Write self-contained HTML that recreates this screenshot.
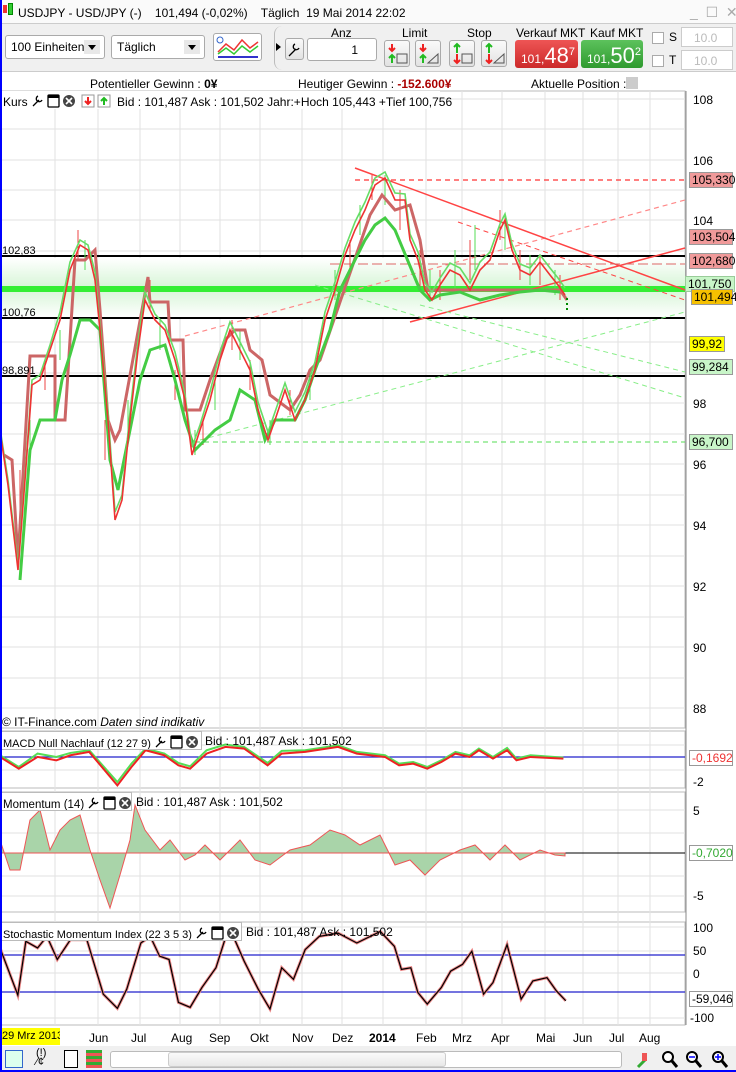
<!DOCTYPE html>
<html><head><meta charset="utf-8"><style>
*{margin:0;padding:0;box-sizing:border-box}
body{width:736px;height:1072px;overflow:hidden;background:#fff;font-family:"Liberation Sans",sans-serif;font-size:12px;color:#000;position:relative}
div{white-space:nowrap}
.a{position:absolute}
.btn{position:absolute;border:1px solid #aaa;border-radius:3px;background:linear-gradient(#fafafa,#e2e2e2)}
.sel{position:absolute;border:1px solid #aaa;border-radius:3px;background:#fff;height:24px;padding:4px 5px;font-size:12px}
.sel i{position:absolute;right:4px;top:4px;width:16px;height:14px;background:#e8e8e8}
.sel i:after{content:"";position:absolute;left:4px;top:5px;border:4px solid transparent;border-top:5px solid #000}
.lbl{position:absolute;font-size:12px;color:#000}
.tag{position:absolute;left:690px;width:44px;height:16px;font-size:12px;line-height:15px;padding-left:2px;border:1px solid #999}
.ic{display:inline-block;vertical-align:-3px;margin-left:3px}
</style></head><body>
<svg width="0" height="0" style="position:absolute"><defs>
<g id="ico"><path d="M2 13L8 7M7 3a3 3 0 1 0 4 4" fill="none" stroke="#000" stroke-width="1.3"/><rect x="17" y="2" width="11" height="12" rx="1" fill="#fff" stroke="#000" stroke-width="1.3"/><rect x="17" y="2" width="11" height="3" fill="#000"/><circle cx="38" cy="8" r="6" fill="#444"/><path d="M35 5l6 6M41 5l-6 6" stroke="#fff" stroke-width="1.6"/></g>
</defs></svg>
<div class="a" style="left:0;top:0;width:2px;height:1072px;background:#00f;z-index:9"></div>
<div class="a" style="left:0;top:1070px;width:736px;height:2px;background:#00f;z-index:9"></div>
<div class="a" style="left:0;top:0;width:736px;height:24px;background:#fafafa;border-bottom:1px solid #ccc"></div>
<div class="a" style="left:3px;top:5px;width:4px;height:8px;background:#e33"></div>
<div class="a" style="left:8px;top:3px;width:5px;height:12px;background:#3c3;border:1px solid #080"></div>
<div class="lbl" style="left:18px;top:6px">USDJPY - USD/JPY (-) &nbsp;&nbsp; 101,494 (-0,02%) &nbsp;&nbsp; Täglich &nbsp;19 Mai 2014 22:02</div>
<div class="lbl" style="left:690px;top:4px;color:#aaa;font-size:14px">_ &nbsp;☐ &nbsp;✕</div>
<div class="a" style="left:0;top:24px;width:736px;height:48px;background:#f0f0f0;border-bottom:1px solid #ccc"></div>
<div class="sel" style="left:5px;top:35px;width:100px">100 Einheiten<i></i></div>
<div class="sel" style="left:111px;top:35px;width:94px">Täglich<i></i></div>
<div class="btn" style="left:213px;top:33px;width:49px;height:28px;background:#fff">
<svg width="47" height="26"><polyline points="4,18 12,10 20,16 28,6 36,14 44,8" fill="none" stroke="#e33" stroke-width="1.5"/><polyline points="4,20 12,14 20,20 28,12 36,18 44,12" fill="none" stroke="#3c3" stroke-width="1.5"/><rect x="4" y="22" width="40" height="2" fill="#33c"/><circle cx="6" cy="6" r="3" fill="none" stroke="#36c"/></svg></div>
<div class="a" style="left:274px;top:26px;width:12px;height:44px;border-left:1px solid #bbb;border-radius:8px 0 0 8px"></div>
<div class="a" style="left:276px;top:43px;border:4px solid transparent;border-left:5px solid #000"></div>
<div class="btn" style="left:285px;top:38px;width:19px;height:22px"><svg width="17" height="20"><path d="M3 17L10 10M9 5a3 3 0 1 0 4 4" fill="none" stroke="#000" stroke-width="1.3"/></svg></div>
<div class="lbl" style="left:331px;top:26px">Anz</div>
<div class="a" style="left:307px;top:38px;width:70px;height:23px;background:#fff;border:1px solid #aaa;border-radius:3px;text-align:right;padding:4px 18px 0 0">1</div>
<div class="lbl" style="left:402px;top:26px">Limit</div>
<div class="lbl" style="left:467px;top:26px">Stop</div>
<div class="btn" style="left:384px;top:40px;width:26px;height:27px"><svg width="24" height="25"><path d="M7 3v7M4 7l3 3 3-3" stroke="#e22" stroke-width="2" fill="none"/><path d="M7 22v-8M4 17l3-3 3 3" stroke="#2b2" stroke-width="2" fill="none"/><rect x="12" y="13" width="10" height="9" fill="none" stroke="#555"/></svg></div>
<div class="btn" style="left:415px;top:40px;width:26px;height:27px"><svg width="24" height="25"><path d="M7 3v7M4 7l3 3 3-3" stroke="#e22" stroke-width="2" fill="none"/><path d="M7 22v-8M4 17l3-3 3 3" stroke="#2b2" stroke-width="2" fill="none"/><path d="M12 22h10V13z" fill="none" stroke="#555"/></svg></div>
<div class="btn" style="left:449px;top:40px;width:26px;height:27px"><svg width="24" height="25"><path d="M7 12V3M4 6l3-3 3 3" stroke="#2b2" stroke-width="2" fill="none"/><path d="M7 13v9M4 19l3 3 3-3" stroke="#e22" stroke-width="2" fill="none"/><rect x="12" y="13" width="10" height="9" fill="none" stroke="#555"/></svg></div>
<div class="btn" style="left:481px;top:40px;width:26px;height:27px"><svg width="24" height="25"><path d="M7 12V3M4 6l3-3 3 3" stroke="#2b2" stroke-width="2" fill="none"/><path d="M7 13v9M4 19l3 3 3-3" stroke="#e22" stroke-width="2" fill="none"/><path d="M12 22h10V13z" fill="none" stroke="#555"/></svg></div>
<div class="lbl" style="left:516px;top:26px">Verkauf MKT</div>
<div class="lbl" style="left:590px;top:26px">Kauf MKT</div>
<div class="a" style="left:515px;top:40px;width:63px;height:28px;background:linear-gradient(#ee5555,#cc2a2a);border-radius:3px;color:#fff;font-size:12px;padding:3px 0 0 6px">101,<span style="font-size:22px">48</span><span style="font-size:11px;vertical-align:8px">7</span></div>
<div class="a" style="left:581px;top:40px;width:62px;height:28px;background:linear-gradient(#5cc25c,#2f9a2f);border-radius:3px;color:#fff;font-size:12px;padding:3px 0 0 6px">101,<span style="font-size:22px">50</span><span style="font-size:11px;vertical-align:8px">2</span></div>
<div class="a" style="left:652px;top:32px;width:12px;height:12px;border:1px solid #aaa;background:#fff"></div>
<div class="a" style="left:652px;top:55px;width:12px;height:12px;border:1px solid #aaa;background:#fff"></div>
<div class="lbl" style="left:669px;top:30px">S</div><div class="lbl" style="left:669px;top:53px">T</div>
<div class="a" style="left:681px;top:27px;width:52px;height:20px;border:1px solid #ccc;background:#fff;color:#bbb;padding:3px 0 0 12px">10.0</div>
<div class="a" style="left:681px;top:50px;width:52px;height:20px;border:1px solid #ccc;background:#fff;color:#bbb;padding:3px 0 0 12px">10.0</div>
<div class="lbl" style="left:90px;top:77px">Potentieller Gewinn : <b>0¥</b></div>
<div class="lbl" style="left:298px;top:77px">Heutiger Gewinn : <b style="color:#a00">-152.600¥</b></div>
<div class="lbl" style="left:531px;top:77px">Aktuelle Position : <b>0</b></div>
<div class="a" style="left:626px;top:77px;width:12px;height:12px;background:#ccc"></div>
<svg class="a" style="left:0;top:90px" width="736" height="982">
<g transform="translate(0,-90)">
<rect x="0" y="91" width="685" height="637" fill="#fff" stroke="#bbb"/>
<rect x="0" y="731" width="685" height="57" fill="#fff" stroke="#bbb"/>
<rect x="0" y="792" width="685" height="120" fill="#fff" stroke="#bbb"/>
<rect x="0" y="922" width="685" height="103" fill="#fff" stroke="#bbb"/>
<g stroke="#e2e2e2" stroke-width="1">
<path d="M55 91V1025M98 91V1025M140 91V1025M180 91V1025M220 91V1025M260 91V1025M302 91V1025M342 91V1025M383 91V1025M426 91V1025M462 91V1025M502 91V1025M545 91V1025M583 91V1025M618 91V1025M650 91V1025"/>
<path d="M0 99H685M0 129H685M0 160H685M0 190H685M0 220H685M0 251H685M0 281H685M0 312H685M0 342H685M0 373H685M0 403H685M0 434H685M0 464H685M0 495H685M0 525H685M0 556H685M0 586H685M0 617H685M0 647H685M0 678H685M0 708H685"/>
<path d="M0 745H685M0 770H685M0 810H685M0 833H685M0 876H685M0 896H685M0 927H685M0 951H685M0 973H685M0 1018H685"/>
</g>
<defs><linearGradient id="gz" x1="0" y1="0" x2="0" y2="1"><stop offset="0" stop-color="#fff"/><stop offset=".5" stop-color="#d6f5d6"/><stop offset="1" stop-color="#fff"/></linearGradient></defs>
<rect x="0" y="258" width="685" height="60" fill="url(#gz)"/>
<path d="M0 256H685M0 318H685M0 376H685" stroke="#000" stroke-width="2"/>
<path d="M0 289H685" stroke="#33ee33" stroke-width="6"/>
<path d="M355 180H685" stroke="#f33" stroke-width="1.2" stroke-dasharray="5,4"/>
<path d="M195 442H685" stroke="#5d5" stroke-width="1" stroke-dasharray="5,4"/>
<path d="M185 336L685 200" stroke="#f88" stroke-width="1.2" stroke-dasharray="5,4"/>
<path d="M355 168L685 290" stroke="#f44" stroke-width="1.5"/>
<path d="M458 222L685 300" stroke="#f44" stroke-width="1" stroke-dasharray="5,4"/>
<path d="M410 322L685 248" stroke="#f44" stroke-width="1.5"/>
<path d="M330 264H685" stroke="#d66" stroke-width="1" stroke-dasharray="10,4"/>
<path d="M200 440L685 312" stroke="#8e8" stroke-width="1" stroke-dasharray="5,4"/>
<path d="M315 285L685 398" stroke="#8e8" stroke-width="1" stroke-dasharray="5,4"/>
<path d="M420 305L685 372" stroke="#8e8" stroke-width="1" stroke-dasharray="5,4"/>
<g stroke="#e44" stroke-width="1"><path d="M20 470v40M45 360v30M78 230v30M105 420v40M150 280v30M175 370v30M203 420v25M232 320v30M250 360v30M290 390v25M350 240v30M372 175v25M400 190v40M420 250v40M440 270v30M470 240v40M500 210v30M520 250v30M540 255v30M560 275v25"/></g>
<g stroke="#5d5" stroke-width="1"><path d="M30 420v30M60 330v30M85 240v30M128 400v40M160 320v30M195 430v25M215 380v30M240 330v30M270 420v25M310 370v30M335 270v30M360 205v30M385 175v30M430 270v30M455 250v40M475 225v45M505 215v35M530 255v30M555 270v25"/></g>
<polyline fill="none" stroke="#cc6666" stroke-width="3" points="4,455 12,460 15,510 18,560 30,356 55,356 55,420 65,420 75,260 85,260 95,250 100,310 108,420 115,440 120,430 148,277 150,302 168,302 170,340 183,340 185,410 200,410 210,380 225,340 235,330 245,330 250,350 262,360 270,395 290,410 300,395 310,370 320,360 370,215 382,195 395,210 410,205 420,240 428,290 560,290 567,300"/>
<polyline fill="none" stroke="#44cc44" stroke-width="3" points="20,580 30,450 40,420 55,420 62,380 70,355 80,320 90,320 100,330 110,460 118,490 130,430 140,380 150,350 165,345 175,380 185,420 195,450 205,440 215,430 230,420 240,390 255,400 265,440 275,420 295,420 305,400 315,370 330,330 340,290 355,260 365,240 375,225 385,218 395,230 420,290 430,300 440,295 460,292 480,300 500,295 520,292 540,290 560,292"/>
<polyline fill="none" stroke="#66dd66" stroke-width="1.6" points="0,428 8,480 18,565 25,475 32,380 40,375 50,345 60,312 70,262 80,240 88,245 95,272 100,325 108,412 115,512 122,495 130,412 138,342 145,292 155,314 165,325 175,352 185,395 192,447 200,425 210,392 220,352 230,322 240,342 250,362 258,402 268,432 275,412 285,383 295,412 305,392 315,362 325,312 335,282 345,248 355,222 365,202 375,178 385,172 395,193 405,194 410,234 418,252 425,283 432,292 440,278 450,263 460,268 470,283 480,262 490,252 500,224 505,214 512,244 520,264 530,268 540,255 550,268 558,278 565,288"/>
<polyline fill="none" stroke="#ee3333" stroke-width="1.6" points="0,431 8,485 18,570 25,480 32,385 40,380 50,350 60,320 70,270 80,245 88,250 95,280 100,330 108,420 115,520 122,500 130,420 138,350 145,300 155,320 165,330 175,360 185,400 192,455 200,430 210,400 220,360 230,330 240,350 250,370 258,410 268,440 275,420 285,390 295,420 305,400 315,370 325,320 335,290 345,255 355,230 365,210 375,185 385,178 395,200 405,200 410,240 418,260 425,290 432,300 440,285 450,270 460,275 470,290 480,270 490,260 500,230 505,220 512,250 520,270 530,275 540,262 550,275 558,285 565,295"/>
<path d="M567 298V312" stroke="#080" stroke-width="2" stroke-dasharray="2,3"/>
<path d="M0 757H685" stroke="#22c" stroke-width="1.2"/>
<g transform="translate(0,700) scale(0.4695,0.335)"><polyline fill="none" stroke="#55dd55" stroke-width="2" vector-effect="non-scaling-stroke" points="0,165 40,200 80,160 120,170 150,158 190,150 250,245 280,190 310,145 350,160 380,188 405,198 440,150 480,133 520,140 570,188 600,152 650,150 720,135 760,155 820,165 850,190 880,185 910,200 940,180 970,155 1000,165 1020,145 1050,170 1080,143 1100,175 1130,165 1200,172"/><polyline fill="none" stroke="#ee2222" stroke-width="2" vector-effect="non-scaling-stroke" points="0,170 40,205 80,170 120,180 150,165 190,155 250,255 280,200 310,150 350,165 380,195 405,205 440,160 480,140 520,145 570,195 600,160 650,155 720,140 760,160 820,170 850,195 880,190 910,205 940,185 970,160 1000,170 1020,150 1050,175 1080,150 1100,180 1130,170 1200,175"/></g>
<path d="M0 853H685" stroke="#000" stroke-width="1"/>
<polygon fill="#a9d4a9" stroke="#e55" stroke-width="1" points="0,853 0,840 10,870 20,870 30,820 40,810 50,850 60,830 70,820 80,815 90,850 100,880 110,908 120,875 130,840 135,805 145,830 160,850 170,840 185,860 195,855 205,845 220,860 240,840 255,860 270,865 290,850 310,845 330,830 345,835 360,845 380,835 395,865 410,860 425,875 440,860 460,850 475,845 490,860 505,845 520,860 540,850 555,855 565,856 565,853"/>
<path d="M0 955H685M0 992H685" stroke="#22c" stroke-width="1.2"/>
<g transform="translate(0,910) scale(0.4695,0.33)"><polyline fill="none" stroke="#e88" stroke-width="3" vector-effect="non-scaling-stroke" points="0,115 38,258 55,95 80,115 100,80 122,150 150,90 185,90 220,255 250,298 270,240 300,100 320,80 340,140 360,150 380,280 405,295 430,235 460,175 480,85 500,90 520,155 550,240 575,300 600,175 625,210 650,120 680,80 720,70 760,100 810,65 840,110 855,180 875,175 890,250 910,285 940,235 960,185 985,165 1005,125 1030,255 1050,220 1080,105 1110,270 1135,215 1165,205 1185,245 1205,275"/><polyline fill="none" stroke="#000" stroke-width="1.2" vector-effect="non-scaling-stroke" points="0,115 38,258 55,95 80,115 100,80 122,150 150,90 185,90 220,255 250,298 270,240 300,100 320,80 340,140 360,150 380,280 405,295 430,235 460,175 480,85 500,90 520,155 550,240 575,300 600,175 625,210 650,120 680,80 720,70 760,100 810,65 840,110 855,180 875,175 890,250 910,285 940,235 960,185 985,165 1005,125 1030,255 1050,220 1080,105 1110,270 1135,215 1165,205 1185,245 1205,275"/></g>
<g font-family="Liberation Sans" font-size="12" fill="#000">
<path d="M686 91V1025" stroke="#888"/>
<text x="693" y="104">108</text><text x="693" y="165">106</text><text x="693" y="225">104</text><text x="693" y="408">98</text><text x="693" y="469">96</text><text x="693" y="530">94</text><text x="693" y="591">92</text><text x="693" y="652">90</text><text x="693" y="713">88</text>
<text x="693" y="786">-2</text><text x="693" y="815">5</text><text x="693" y="900">-5</text>
<text x="693" y="932">100</text><text x="693" y="955">50</text><text x="693" y="978">0</text><text x="690" y="1022">-100</text>
<text x="2" y="254" font-size="11">102,83</text><text x="2" y="316" font-size="11">100,76</text><text x="2" y="374" font-size="11">98,891</text>
<text x="89" y="1042">Jun</text><text x="131" y="1042">Jul</text><text x="171" y="1042">Aug</text><text x="209" y="1042">Sep</text><text x="250" y="1042">Okt</text><text x="292" y="1042">Nov</text><text x="332" y="1042">Dez</text><text x="369" y="1042" font-weight="bold">2014</text><text x="416" y="1042">Feb</text><text x="452" y="1042">Mrz</text><text x="491" y="1042">Apr</text><text x="536" y="1042">Mai</text><text x="573" y="1042">Jun</text><text x="609" y="1042">Jul</text><text x="639" y="1042">Aug</text>
</g>
</g></svg>
<div class="tag" style="top:172px;background:#f09a9a;left:689px">105,330</div>
<div class="tag" style="top:229px;background:#f09a9a;left:689px">103,504</div>
<div class="tag" style="top:253px;background:#f09a9a;left:689px">102,680</div>
<div class="tag" style="top:276px;background:#c8f5c8;left:685px;width:50px;border-color:#9c9">101,750</div>
<div class="tag" style="top:289px;background:#f5c000;left:691px;width:42px">101,494</div>
<div class="tag" style="top:336px;background:#ffff00;left:689px;width:36px">99,92</div>
<div class="tag" style="top:359px;background:#c8f5c8;left:689px">99,284</div>
<div class="tag" style="top:434px;background:#c8f5c8;left:689px">96,700</div>
<div class="tag" style="top:750px;background:#fff;color:#e33;left:689px">-0,1692</div>
<div class="tag" style="top:845px;background:#fff;color:#3a3;left:689px">-0,7020</div>
<div class="tag" style="top:991px;background:#fff;left:689px">-59,046</div>
<div class="a" style="left:0;top:91px;width:440px;height:18px;background:#fff;font-size:12px;padding:2px 0 0 3px">Kurs<svg class="ic" width="46" height="16"><use href="#ico"/></svg><svg class="ic" width="34" height="16"><rect x="2" y="2" width="12" height="12" fill="#fff" stroke="#999"/><path d="M8 4v7M5 8l3 3 3-3" stroke="#e22" stroke-width="2" fill="none"/><rect x="18" y="2" width="12" height="12" fill="#fff" stroke="#999"/><path d="M24 12V5M21 8l3-3 3 3" stroke="#2b2" stroke-width="2" fill="none"/></svg> Bid : 101,487 Ask : 101,502 Jahr:+Hoch 105,443 +Tief 100,756</div>
<div class="lbl" style="left:2px;top:715px">© IT-Finance.com <i>Daten sind indikativ</i></div>
<div class="a" style="left:0;top:731px;width:202px;height:19px;background:#fff;border:1px solid #bbb;padding:2px 0 0 2px;font-size:11px;overflow:hidden">MACD Null Nachlauf (12 27 9)<svg class="ic" width="46" height="16"><use href="#ico"/></svg></div>
<div class="lbl" style="left:205px;top:734px">Bid : 101,487 Ask : 101,502</div>
<div class="a" style="left:0;top:792px;width:132px;height:19px;background:#fff;border:1px solid #bbb;padding:2px 0 0 2px;font-size:11.5px;overflow:hidden">Momentum (14)<svg class="ic" width="46" height="16"><use href="#ico"/></svg></div>
<div class="lbl" style="left:136px;top:795px">Bid : 101,487 Ask : 101,502</div>
<div class="a" style="left:0;top:922px;width:242px;height:19px;background:#fff;border:1px solid #bbb;padding:2px 0 0 2px;font-size:11px;overflow:hidden">Stochastic Momentum Index (22 3 5 3)<svg class="ic" width="46" height="16"><use href="#ico"/></svg></div>
<div class="lbl" style="left:246px;top:925px">Bid : 101,487 Ask : 101,502</div>
<div class="a" style="left:1px;top:1028px;width:59px;height:17px;background:#ffff00;font-size:11px;padding:2px 0 0 1px;overflow:hidden">29 Mrz 2013</div>
<div class="a" style="left:0;top:1046px;width:736px;height:24px;background:#f0f0f0"></div>
<div class="a" style="left:5px;top:1050px;width:18px;height:18px;border:1px solid #36c;background:#dfe"></div>
<div class="a" style="left:36px;top:1049px;font-size:11px;line-height:9px">(!)<br>⁄¢</div>
<div class="a" style="left:64px;top:1050px;width:14px;height:18px;border:1px solid #000;background:#fff"></div>
<div class="a" style="left:86px;top:1050px;width:16px;height:18px;background:repeating-linear-gradient(#3a3 0 3px,#e55 3px 6px)"></div>
<div class="a" style="left:110px;top:1051px;width:512px;height:17px;border:1px solid #bbb;background:#fff;border-radius:3px"></div>
<div class="a" style="left:168px;top:1052px;width:278px;height:15px;border:1px solid #ccc;background:linear-gradient(#fafafa,#e8e8e8);border-radius:3px"></div>
<svg class="a" style="left:634px;top:1049px" width="100" height="21"><path d="M4 18l7-7" stroke="#3a3" stroke-width="3"/><rect x="8" y="4" width="5" height="8" fill="#e55"/><circle cx="34" cy="8" r="5" fill="#fff" stroke="#000" stroke-width="2"/><path d="M38 12l5 6" stroke="#000" stroke-width="3"/><circle cx="58" cy="8" r="5" fill="#fff" stroke="#000" stroke-width="2"/><path d="M55 8h6" stroke="#00f" stroke-width="1.5"/><path d="M62 12l5 6" stroke="#000" stroke-width="3"/><circle cx="84" cy="8" r="5" fill="#fff" stroke="#000" stroke-width="2"/><path d="M81 8h6M84 5v6" stroke="#00f" stroke-width="1.5"/><path d="M88 12l5 6" stroke="#000" stroke-width="3"/></svg>
</body></html>
